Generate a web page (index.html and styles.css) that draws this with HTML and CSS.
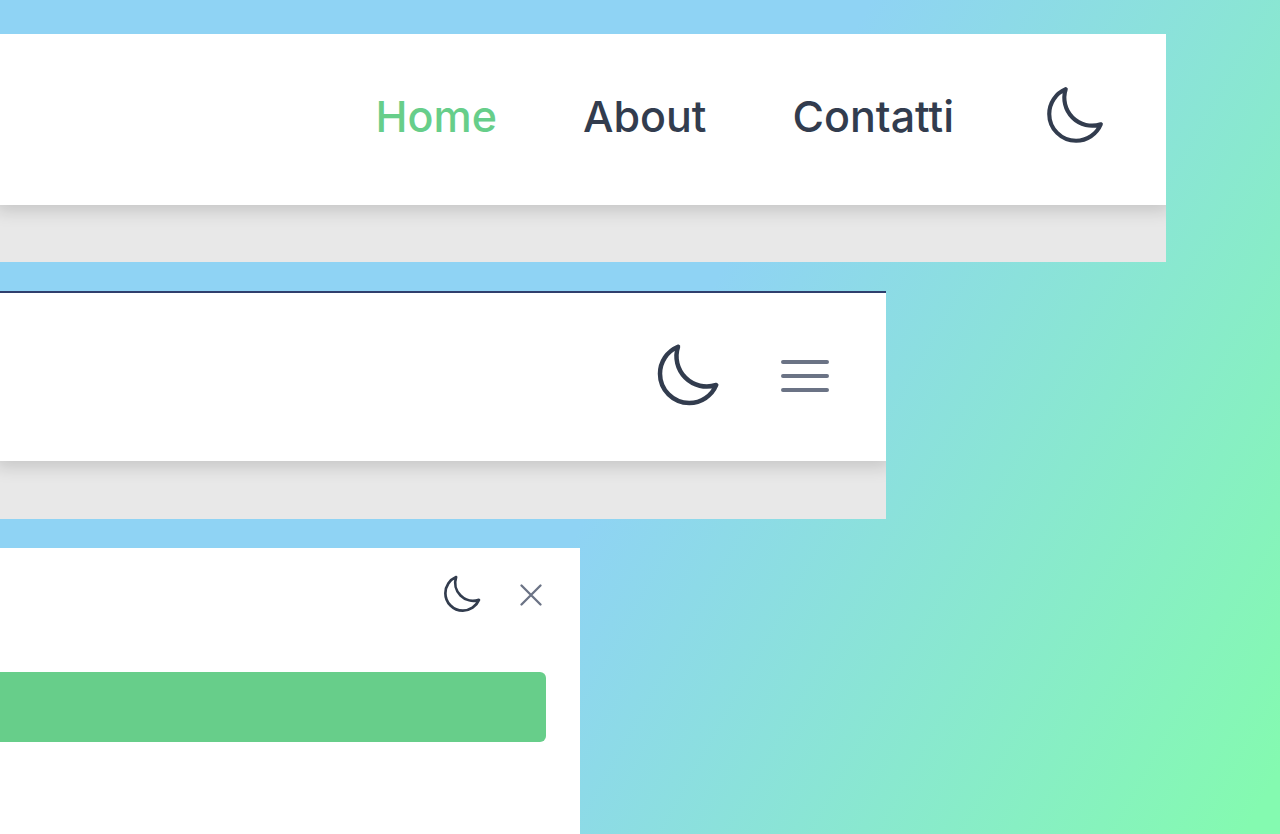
FILE: index.html
```html
<!DOCTYPE html>
<html lang="it">
<head>
  <meta charset="UTF-8" />
  <meta name="viewport" content="width=device-width, initial-scale=1.0" />
  <title>Navbar</title>
  <link rel="stylesheet" href="styles.css">
</head>
<body>
  <svg class="sprite" aria-hidden="true">
    <symbol id="moon" viewBox="0 0 24 24">
      <path d="M21.75 15A10.1 10.1 0 019 2.25 9.753 9.753 0 003 11.25C3 16.635 7.365 21 12.75 21A9.753 9.753 0 0021.75 15z" />
    </symbol>
  </svg>

  <!-- Desktop -->
  <section class="frame frame-desktop">
    <header class="navbar">
      <nav class="nav-links">
        <a class="active" href="#">Home</a>
        <a href="#">About</a>
        <a href="#">Contatti</a>
      </nav>
      <button class="icon-btn" type="button" aria-label="Dark mode">
        <svg class="icon"><use href="#moon" /></svg>
      </button>
    </header>
  </section>

  <!-- Tablet -->
  <section class="frame frame-tablet">
    <header class="navbar">
      <button class="icon-btn" type="button" aria-label="Dark mode">
        <svg class="icon"><use href="#moon" /></svg>
      </button>
      <button class="icon-btn menu-btn" type="button" aria-label="Menu">
        <svg class="icon" viewBox="0 0 24 24"><path d="M3.75 6.75h16.5M3.75 12h16.5M3.75 17.25h16.5" /></svg>
      </button>
    </header>
  </section>

  <!-- Mobile, menu open -->
  <section class="frame frame-mobile">
    <header class="navbar">
      <button class="icon-btn" type="button" aria-label="Dark mode">
        <svg class="icon"><use href="#moon" /></svg>
      </button>
      <button class="icon-btn menu-btn" type="button" aria-label="Close">
        <svg class="icon" viewBox="0 0 24 24"><path d="M6 18L18 6M6 6l12 12" /></svg>
      </button>
    </header>
    <nav class="menu">
      <a class="menu-item" href="#" aria-label="Home"></a>
    </nav>
  </section>
</body>
</html>
```
FILE: styles.css
```css
:root {
  --text-color: #323c4e;
  --muted: #6b7385;
  --accent: #67ce8a;
  --page: #e8e8e8;
}

* {
  margin: 0;
  padding: 0;
  box-sizing: border-box;
}

body {
  min-height: 100vh;
  display: flex;
  flex-direction: column;
  gap: 29px;
  padding-top: 34px;
  background: linear-gradient(119deg, #8fd3f4 50%, #84fab0 98%);
  color: var(--text-color);
  font-family: Inter, sans-serif;
}

.sprite {
  display: none;
}

.frame {
  background: var(--page);
  overflow: hidden;
}

.frame-desktop {
  margin-right: 114px;
  padding-bottom: 57px;
}

.frame-tablet {
  margin-right: 394px;
  padding-bottom: 58px;
  border-top: 2px solid #2f3f6d;
}

.frame-mobile {
  flex: 1;
  margin-right: 700px;
  background: #fff;
}

.navbar {
  display: flex;
  align-items: center;
  justify-content: flex-end;
  background: #fff;
  box-shadow: 0 2px 16px 4px rgba(0, 0, 0, 0.15);
}

.frame-desktop .navbar {
  gap: 87px;
  height: 171px;
  padding: 0 59px 8px 0;
}

.frame-tablet .navbar {
  gap: 50px;
  height: 168px;
  padding: 0 49px 2px 0;
}

.frame-mobile .navbar {
  gap: 29px;
  height: 94px;
  padding: 0 30px 1px 0;
  box-shadow: none;
}

.nav-links {
  display: flex;
  gap: 86px;
}

.nav-links a {
  color: inherit;
  font-size: 43px;
  font-weight: 500;
  line-height: 56px;
  text-decoration: none;
}

.nav-links .active {
  color: var(--accent);
}

.icon-btn {
  border: none;
  background: transparent;
  color: var(--text-color);
  cursor: pointer;
}

.menu-btn {
  color: var(--muted);
}

.icon {
  display: block;
  width: 66px;
  height: 66px;
  fill: none;
  stroke: currentColor;
  stroke-width: 1.5;
  stroke-linecap: round;
  stroke-linejoin: round;
}

.frame-tablet .icon {
  width: 72px;
  height: 72px;
}

.frame-tablet .menu-btn .icon {
  width: 64px;
  height: 64px;
}

.frame-mobile .icon {
  width: 43px;
  height: 43px;
}

.frame-mobile .menu-btn .icon {
  width: 38px;
  height: 38px;
}

.menu {
  padding: 30px 34px 0 0;
}

.menu-item {
  display: block;
  height: 70px;
  border-radius: 0 6px 6px 0;
  background: var(--accent);
}
```
